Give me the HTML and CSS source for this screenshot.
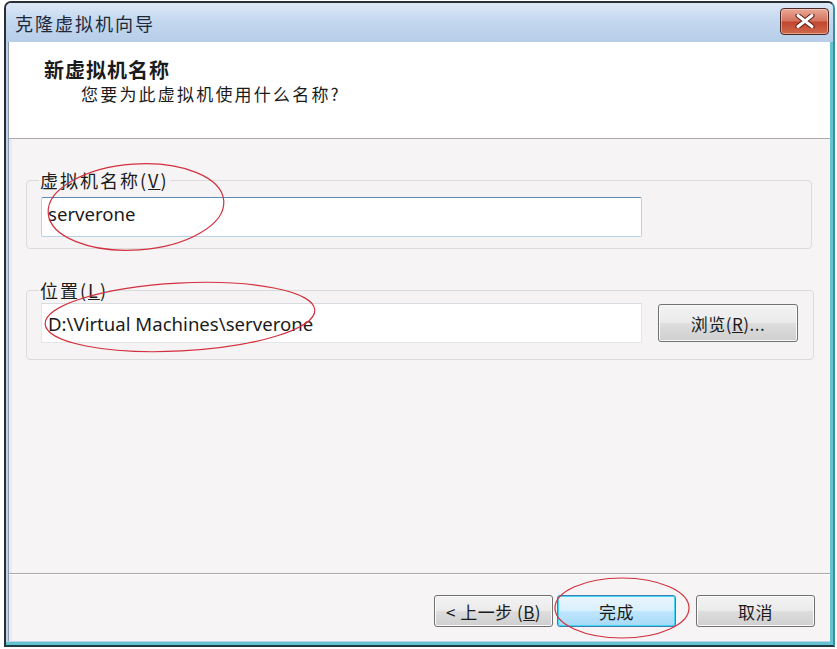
FILE: index.html
```html
<!DOCTYPE html>
<html lang="zh-CN">
<head>
  <meta charset="UTF-8">
  <title>克隆虚拟机向导</title>
  <link rel="stylesheet" href="styles.css">
</head>
<body>
  <div class="window">
    <div class="titlebar">
      <span class="title">克隆虚拟机向导</span>
      <button class="close" aria-label="关闭">
        <svg width="20" height="14" viewBox="0 0 20 14">
          <path d="M3 1.5 L17 12.5 M17 1.5 L3 12.5" stroke="#5a1c14" stroke-width="5" stroke-linecap="round"/>
          <path d="M3 1.5 L17 12.5 M17 1.5 L3 12.5" stroke="#ffffff" stroke-width="3" stroke-linecap="round"/>
        </svg>
      </button>
    </div>

    <div class="client">
      <div class="header">
        <div class="header-title">新虚拟机名称</div>
        <div class="header-sub">您要为此虚拟机使用什么名称?</div>
      </div>

      <div class="content">
        <fieldset class="group group-name">
          <legend>虚拟机名称(<u>V</u>)</legend>
          <input class="field field-focus" type="text" value="serverone">
        </fieldset>

        <fieldset class="group group-path">
          <legend>位置(<u>L</u>)</legend>
          <div class="row">
            <input class="field" type="text" value="D:\Virtual Machines\serverone">
            <button class="btn btn-browse">浏览(<u>R</u>)...</button>
          </div>
        </fieldset>
      </div>

      <div class="footer">
        <button class="btn btn-back">&lt; 上一步 (<u>B</u>)</button>
        <button class="btn btn-default">完成</button>
        <button class="btn btn-cancel">取消</button>
      </div>
    </div>
  </div>

  <!-- hand-drawn red marks on the screenshot -->
  <svg class="marks" width="837" height="649" viewBox="0 0 837 649">
    <ellipse cx="136" cy="207" rx="88" ry="43" transform="rotate(-4 136 207)"/>
    <ellipse cx="180" cy="317" rx="135" ry="34" transform="rotate(-3 180 317)"/>
    <ellipse cx="622" cy="608" rx="67" ry="30"/>
  </svg>
</body>
</html>
```

FILE: styles.css
```css
:root {
  --frame: #bcd2ec;
  --client: #f7f4f5;
  --text: #1b1b1b;
  --line: #a9a9a9;
  --group-border: #dcdadb;
  --mark: #d2303e;
}

* {
  margin: 0;
  padding: 0;
  box-sizing: border-box;
}

body {
  position: relative;
  width: 837px;
  height: 649px;
  background: #ffffff;
  font-family: "Noto Sans", "Noto Sans CJK SC", sans-serif;
  color: var(--text);
  overflow: hidden;
}

.window {
  margin: 1px 2px 2px 4px;
  height: 646px;
  display: flex;
  flex-direction: column;
  border: 2px solid #2a2f36;
  border-right-color: #3a8fa0;
  border-bottom-color: #1f3a44;
  border-radius: 7px 7px 0 0;
  background: var(--frame);
  box-shadow: inset 0 -3px 0 #63c3cf, inset -3px 0 0 #63c3cf;
  padding: 0 3px 4px 2px;
}

.titlebar {
  height: 39px;
  display: flex;
  align-items: center;
  justify-content: space-between;
  padding: 0 4px 0 9px;
  background: linear-gradient(#dde8f6, #c4d8ef 45%, #b7cee9);
  border-radius: 5px 5px 0 0;
  margin: 0 -3px 0 -2px;
}

.title {
  font-family: "Noto Sans CJK SC", sans-serif;
  font-size: 18px;
  color: #1e2838;
  letter-spacing: 2px;
}

.close {
  width: 49px;
  height: 27px;
  margin-top: -3px;
  display: flex;
  align-items: center;
  justify-content: center;
  border: 1px solid #4a2a26;
  border-radius: 4px;
  background: linear-gradient(#e9a996, #d4735e 48%, #c2452f 52%, #cf6a4c);
  box-shadow: inset 0 0 0 1px rgba(255, 220, 210, 0.5);
}

.client {
  flex: 1;
  display: flex;
  flex-direction: column;
  background: var(--client);
  border-left: 1px solid #8b96a6;
  box-shadow: inset 3px 0 0 #e6ebf6;
}

.header {
  height: 97px;
  background: #ffffff;
  border-bottom: 1px solid var(--line);
  padding: 16px 0 0 35px;
}

.header-title {
  font-family: "Noto Sans CJK SC", sans-serif;
  font-weight: 700;
  font-size: 20px;
  line-height: 24px;
  letter-spacing: 1px;
}

.header-sub {
  font-family: "Noto Sans CJK SC", sans-serif;
  font-size: 17px;
  line-height: 24px;
  padding-left: 37px;
  letter-spacing: 2.2px;
}

.content {
  flex: 1;
  padding: 31px 18px 0 17px;
}

.group {
  border: 1px solid var(--group-border);
  border-radius: 4px;
  background: #f5f3f4;
}

.group legend {
  margin-left: -2px;
  padding: 0 1px;
  font-family: "Noto Sans CJK SC", sans-serif;
  font-size: 18px;
  line-height: 20px;
  letter-spacing: 2px;
}

.group-name {
  padding: 7px 15px 11px 14px;
}

.group-path {
  margin-top: 31px;
  padding: 3px 15px 16px 14px;
}

.row {
  display: flex;
  align-items: center;
  gap: 16px;
}

.field {
  width: 601px;
  height: 40px;
  padding: 0 6px;
  font-family: "Noto Sans", "Noto Sans CJK SC", sans-serif;
  font-size: 18.6px;
  color: var(--text);
  background: #ffffff;
  border: 1px solid #e3e6ea;
  border-top-color: #d8dbe0;
  outline: none;
}

.field-focus {
  padding-bottom: 7px;
  border: 1px solid #b9d2e6;
  border-top-color: #5d8bb3;
  border-radius: 2px;
}

.btn {
  font-family: "Noto Sans CJK SC", sans-serif;
  font-size: 17px;
  color: var(--text);
  border: 1px solid #707070;
  border-radius: 3px;
  background: linear-gradient(#f2f2f2, #ebebeb 48%, #dddddd 52%, #cfcfcf);
  box-shadow: inset 0 0 0 1px #fbfbfb;
  letter-spacing: 0.5px;
}

.btn-browse {
  width: 140px;
  height: 38px;
}

.footer {
  height: 68px;
  border-top: 1px solid var(--line);
  box-shadow: inset 0 1px 0 #ffffff;
  display: flex;
  justify-content: flex-end;
  align-items: flex-start;
  padding: 21px 15px 0 0;
}

.footer .btn {
  width: 119px;
  height: 32px;
}

.btn-back {
  margin-right: 4px;
}

.btn-default {
  margin-right: 20px;
  border-color: #3c7fb1;
  background: linear-gradient(#eaf6fd, #d9f0fc 48%, #bee6fd 52%, #a7d9f5);
  box-shadow: inset 0 0 0 1px #48d5f5;
}

.marks {
  position: absolute;
  top: 0;
  left: 0;
  pointer-events: none;
}

.marks ellipse {
  fill: none;
  stroke: var(--mark);
  stroke-width: 1.2;
}
```
